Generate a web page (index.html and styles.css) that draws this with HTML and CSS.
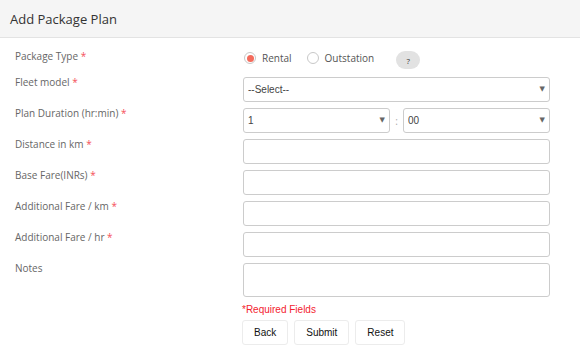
FILE: index.html
```html
<!doctype html>
<html>
<head>
<meta charset="utf-8">
<title>Add Package Plan</title>
<link rel="stylesheet" href="styles.css">
</head>
<body>
	<div class="panel-head">
		<h2>Add Package Plan</h2>
	</div>

	<form class="plan-form">
		<div class="row row-type">
			<label class="lbl">Package Type <i>*</i></label>
			<div class="ctrl radios">
				<label class="radio on"><span class="dot"></span>Rental</label>
				<label class="radio"><span class="dot"></span>Outstation</label>
				<span class="help">?</span>
			</div>
		</div>

		<div class="row">
			<label class="lbl">Fleet model <i>*</i></label>
			<div class="ctrl">
				<div class="sel"><select><option>--Select--</option></select></div>
			</div>
		</div>

		<div class="row">
			<label class="lbl">Plan Duration (hr:min) <i>*</i></label>
			<div class="ctrl duo">
				<div class="sel"><select><option>1</option></select></div>
				<span class="colon">:</span>
				<div class="sel"><select><option>00</option></select></div>
			</div>
		</div>

		<div class="row">
			<label class="lbl">Distance in km <i>*</i></label>
			<div class="ctrl"><input type="text"></div>
		</div>

		<div class="row">
			<label class="lbl">Base Fare(INRs) <i>*</i></label>
			<div class="ctrl"><input type="text"></div>
		</div>

		<div class="row">
			<label class="lbl">Additional Fare / km <i>*</i></label>
			<div class="ctrl"><input type="text"></div>
		</div>

		<div class="row">
			<label class="lbl">Additional Fare / hr <i>*</i></label>
			<div class="ctrl"><input type="text"></div>
		</div>

		<div class="row">
			<label class="lbl">Notes</label>
			<div class="ctrl"><textarea></textarea></div>
		</div>

		<div class="row row-foot">
			<span></span>
			<div class="foot">
				<p class="req">*Required Fields</p>
				<div class="btns">
					<button type="button">Back</button>
					<button type="button">Submit</button>
					<button type="button">Reset</button>
				</div>
			</div>
		</div>
	</form>
</body>
</html>
```

FILE: styles.css
```css
* { margin:0; padding:0; box-sizing:border-box; }
body { background:#fff; font-family:"Open Sans", "Liberation Sans", sans-serif; color:#555; }

.panel-head { height:38px; background:#f5f5f5; border-bottom:1px solid #e3e3e3; padding:0 10px; display:flex; align-items:center; }
.panel-head h2 { font-size:13px; font-weight:normal; color:#333; }

.plan-form { padding:12px 0 0 15px; }
.row { display:grid; grid-template-columns:228px 307px; margin-bottom:6px; }
.lbl { font-size:10px; line-height:13px; color:#666; margin-top:-1px; }
.lbl i { font-style:normal; color:#f5505a; }

.row-type { height:21px; margin-bottom:6px; }
.row-type .lbl { margin-top:0; }
.radios { display:flex; align-items:flex-start; font-size:10px; color:#555; }
.radio { display:flex; align-items:center; height:16px; margin-right:14px; }
.radio .dot { width:12px; height:12px; border:1px solid #c8c8c8; border-radius:50%; margin:0 6px 0 1px; display:flex; align-items:center; justify-content:center; }
.radio.on .dot::after { content:""; width:7px; height:7px; border-radius:50%; background:#f46b5c; }
.help { margin:1px 0 0 8px; width:24px; height:18px; border-radius:9px; background:#e2e2e2; color:#333; font-size:8px; display:flex; align-items:center; justify-content:center; }

.sel { position:relative; }
.sel::after { content:"\25BC"; position:absolute; right:5px; top:8px; font-size:7px; color:#666; pointer-events:none; font-family:"DejaVu Sans", sans-serif; }
select, input, textarea { display:block; width:100%; height:25px; border:1px solid #ccc; border-radius:3px; background:#fff; font-family:"Liberation Sans", Arial, sans-serif; font-size:10px; color:#444; outline:none; }
select { appearance:none; -webkit-appearance:none; padding:0 0 0 4px; }
textarea { height:34px; resize:none; }

.duo { display:flex; align-items:center; }
.duo .sel { flex:1; }
.colon { width:13px; text-align:center; font-size:10px; color:#aaa; }

.foot { margin-left:-1px; }
.req { font-family:"Liberation Sans", Arial, sans-serif; font-size:10px; line-height:13px; color:#f3232f; }
.btns { display:flex; gap:6px; margin-top:4px; }
.btns button { height:25px; padding:0 11px; background:#fff; border:1px solid #ececec; border-radius:3px; font-family:"Liberation Sans", Arial, sans-serif; font-size:10px; color:#111; }
```
